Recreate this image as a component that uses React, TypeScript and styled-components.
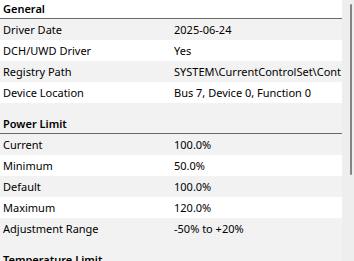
import React from "react";
import styled, { createGlobalStyle } from "styled-components";

const Global = createGlobalStyle`
  html, body { margin: 0; padding: 0; background: #ffffff; overflow: hidden; }
  body { font-family: "Segoe UI", "Noto Sans", "Open Sans", sans-serif; }
`;

const Frame = styled.div`
  display: flex;
  width: 354px;
  height: 261px;
  overflow: hidden;
`;

const List = styled.div`
  width: 342px;
  display: flex;
  flex-direction: column;
  flex: none;
`;

const Section = styled.div<{ $first?: boolean }>`
  display: flex;
  flex-direction: column;
  background: ${(p) => (p.$first ? "#ffffff" : "#f2f2f2")};
  padding-top: ${(p) => (p.$first ? "0" : "12px")};
`;

const Header = styled.div`
  height: 18px;
  line-height: 18px;
  padding-left: 3px;
  font-size: 11px;
  font-weight: 600;
  color: #000;
  border-bottom: 1px solid #6a6a6a;
  white-space: nowrap;
`;

const Row = styled.div<{ $alt: boolean }>`
  display: grid;
  grid-template-columns: 171px 1fr;
  height: 21px;
  line-height: 21px;
  padding-left: 3px;
  font-size: 11px;
  color: #000;
  background: ${(p) => (p.$alt ? "#f2f2f2" : "#ffffff")};
  white-space: nowrap;
  overflow: hidden;
`;

const Cell = styled.span`
  overflow: hidden;
`;

const Track = styled.div`
  flex: none;
  width: 12px;
  background: #eeeeee;
  display: flex;
  justify-content: flex-end;
  padding-right: 2px;
  box-sizing: border-box;
`;

const Thumb = styled.div`
  width: 2px;
  height: 171px;
  margin-top: 4px;
  background: #858585;
  border-radius: 1px;
`;

type Sec = { title: string; rows: [string, string][] };

const sections: Sec[] = [
  {
    title: "General",
    rows: [
      ["Driver Date", "2025-06-24"],
      ["DCH/UWD Driver", "Yes"],
      ["Registry Path", "SYSTEM\\CurrentControlSet\\Cont"],
      ["Device Location", "Bus 7, Device 0, Function 0"],
    ],
  },
  {
    title: "Power Limit",
    rows: [
      ["Current", "100.0%"],
      ["Minimum", "50.0%"],
      ["Default", "100.0%"],
      ["Maximum", "120.0%"],
      ["Adjustment Range", "-50% to +20%"],
    ],
  },
  {
    title: "Temperature Limit",
    rows: [
      ["Current", "83.0 °C"],
      ["Minimum", "65.0 °C"],
    ],
  },
];

export default function App() {
  return (
    <>
      <Global />
      <Frame>
        <List>
          {sections.map((s, i) => (
            <Section key={s.title} $first={i === 0}>
              <Header>{s.title}</Header>
              {s.rows.map(([k, v], j) => (
                <Row key={k} $alt={j % 2 === 0}>
                  <Cell>{k}</Cell>
                  <Cell>{v}</Cell>
                </Row>
              ))}
            </Section>
          ))}
        </List>
        <Track>
          <Thumb />
        </Track>
      </Frame>
    </>
  );
}
